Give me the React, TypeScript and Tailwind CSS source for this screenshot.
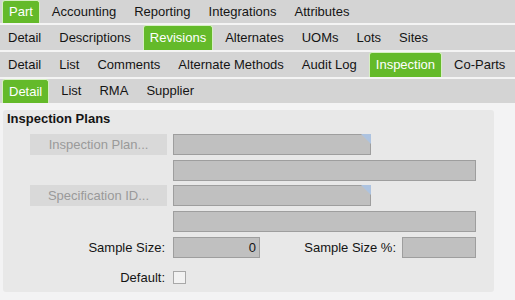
import React from "react";

type Tab = { label: string; active?: boolean };

const rows: { tabs: Tab[]; h: string }[] = [
  {
    h: "h-[23px]",
    tabs: [
      { label: "Part", active: true },
      { label: "Accounting" },
      { label: "Reporting" },
      { label: "Integrations" },
      { label: "Attributes" },
    ],
  },
  {
    h: "h-[25px]",
    tabs: [
      { label: "Detail" },
      { label: "Descriptions" },
      { label: "Revisions", active: true },
      { label: "Alternates" },
      { label: "UOMs" },
      { label: "Lots" },
      { label: "Sites" },
    ],
  },
  {
    h: "h-[25px]",
    tabs: [
      { label: "Detail" },
      { label: "List" },
      { label: "Comments" },
      { label: "Alternate Methods" },
      { label: "Audit Log" },
      { label: "Inspection", active: true },
      { label: "Co-Parts" },
    ],
  },
  {
    h: "h-[24px]",
    tabs: [
      { label: "Detail", active: true },
      { label: "List" },
      { label: "RMA" },
      { label: "Supplier" },
    ],
  },
];

const TabRow: React.FC<{ tabs: Tab[]; h: string }> = ({ tabs, h }) => (
  <div className={`${h} bg-[#d4d4d4] flex flex-row items-stretch gap-[6px] pl-[2px]`}>
    {tabs.map((t) =>
      t.active ? (
        <div
          key={t.label}
          className="bg-[#64ba2a] text-white px-[6px] flex items-center rounded-t-[3px] border border-b-0 border-[#d6efc2]"
        >
          {t.label}
        </div>
      ) : (
        <div key={t.label} className="text-[#141414] px-[6px] flex items-center">
          {t.label}
        </div>
      )
    )}
  </div>
);

const Field: React.FC<{ w: string; lookup?: boolean; value?: string }> = ({ w, lookup, value }) => (
  <div className={`${w} h-[21px] relative bg-[#c0c0c0] border border-[#9e9e9e] flex items-center justify-end pr-[3px] text-[#141414]`}>
    {value}
    {lookup && (
      <div className="absolute top-[-1px] right-[-1px] w-0 h-0 border-t-[10px] border-l-[10px] border-t-[#adc3e0] border-l-transparent" />
    )}
  </div>
);

const LookupButton: React.FC<{ label: string }> = ({ label }) => (
  <div className="w-[137px] h-[21px] bg-[#d9d9d9] text-[#9a9a9a] flex items-center justify-center">
    {label}
  </div>
);

export default function App() {
  return (
    <div className="w-[515px] h-[300px] bg-[#f3f3f4] text-[13px] font-['Liberation_Sans',Arial,sans-serif] overflow-hidden">
      <div className="flex flex-col gap-[2px] bg-[#f4f4f4]">
        {rows.map((r, i) => (
          <TabRow key={i} tabs={r.tabs} h={r.h} />
        ))}
      </div>

      <div className="ml-[3px] mt-[7px] w-[491px] h-[182px] bg-[#e8e8e8] rounded-[3px] flex flex-col">
        <p className="font-bold text-[#141414] pl-[4px] pt-[1px] leading-[16px]">Inspection Plans</p>

        <div className="flex flex-row items-center gap-[6px] ml-[27px] mt-[7px]">
          <LookupButton label="Inspection Plan..." />
          <Field w="w-[198px]" lookup />
        </div>
        <div className="flex flex-row ml-[170px] mt-[5px]">
          <Field w="w-[303px]" />
        </div>
        <div className="flex flex-row items-center gap-[6px] ml-[27px] mt-[4px]">
          <LookupButton label="Specification ID..." />
          <Field w="w-[198px]" lookup />
        </div>
        <div className="flex flex-row ml-[170px] mt-[5px]">
          <Field w="w-[303px]" />
        </div>

        <div className="flex flex-row items-center mt-[5px]">
          <span className="w-[162px] text-right text-[#141414]">Sample Size:</span>
          <div className="ml-[8px]">
            <Field w="w-[87px]" value="0" />
          </div>
          <span className="w-[136px] text-right text-[#141414]">Sample Size %:</span>
          <div className="ml-[6px]">
            <Field w="w-[74px]" />
          </div>
        </div>

        <div className="flex flex-row items-center mt-[10px]">
          <span className="w-[162px] text-right text-[#141414]">Default:</span>
          <div className="ml-[8px] w-[13px] h-[13px] bg-[#f2f2f2] border border-[#a8a8a8]" />
        </div>
      </div>
    </div>
  );
}
